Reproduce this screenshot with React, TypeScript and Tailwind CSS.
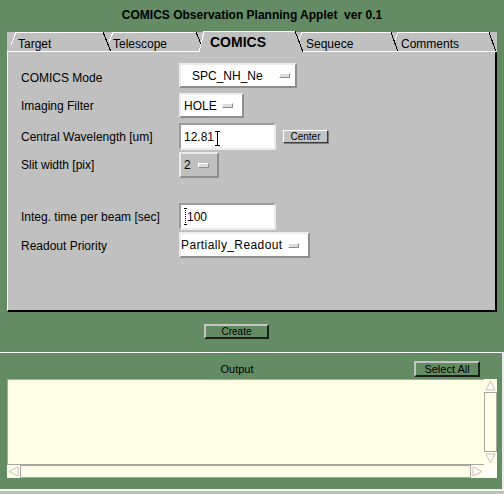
import React from 'react';

const FONT = "font-['Liberation_Sans',Arial,Helvetica,sans-serif]";

// small raised bar shown on the right of an option menu
const Indicator = () => (
  <span className="inline-block shrink-0 w-[11px] h-[5px] bg-[#dcdcdc] border border-t-white border-l-white border-b-[#8c8c8c] border-r-[#8c8c8c]" />
);

const Choice = ({ value, className }: { value: string; className: string }) => (
  <div
    className={`flex items-center h-full border-2 border-t-[#ececec] border-l-[#ececec] border-b-[#8e8e8e] border-r-[#8e8e8e] ${className}`}
  >
    <span>{value}</span>
    <Indicator />
  </div>
);

const inputCls =
  'flex items-center h-full w-[97px] bg-white border-2 border-t-[#9c9c9c] border-l-[#9c9c9c] border-b-[#ececec] border-r-[#ececec] pl-[3px]';

const greenBtn =
  'flex items-center justify-center bg-[#648c64] border-2 border-t-[#c4c4c4] border-l-[#c4c4c4] border-b-[#1c1c1c] border-r-[#1c1c1c]';

const TabOutline = () => (
  <svg className="absolute inset-0" width="490" height="22" viewBox="7 30 490 22" shapeRendering="crispEdges">
    <rect x="7" y="32" width="490" height="20" fill="#c0c0c0" />
    <path d="M16 32.5H103 M113 32.5H196 M302 32.5H391 M398 32.5H489" stroke="#fff" />
    <path d="M16 32L11 45 M113 32L109 42 M302 32L299 40 M398 32L395 40" stroke="#fff" />
    <path d="M103 32L111 52 M196 32L201 44 M391 32L398 52 M489 32L496 52" stroke="#000" />
    {/* selected tab */}
    <polygon points="199,52 204,31 295,31 303,52" fill="#c0c0c0" />
    <path d="M199 52L204 31.5H295" stroke="#fff" fill="none" />
    <path d="M295 31L303 52" stroke="#000" />
    <path d="M7 51.5H199 M303 51.5H497" stroke="#fff" />
  </svg>
);

const Arrow = ({ dir }: { dir: 'up' | 'down' | 'left' | 'right' }) => {
  const pts = {
    up: '6.5,2 11,11 2,11',
    down: '2,2 11,2 6.5,11',
    left: '2,6.5 11,2 11,11',
    right: '2,2 11,6.5 2,11',
  }[dir];
  return (
    <svg width="13" height="13" viewBox="0 0 13 13" className="shrink-0">
      <rect x="0" y="0" width="13" height="13" fill="#fffee8" />
      <polygon points={pts} fill="#fffff6" stroke="#c4c4bc" strokeWidth="1" />
    </svg>
  );
};

const tabs = [
  { label: 'Target', cls: 'w-[106px] pl-[11px] mt-[8px] text-[12px]' },
  { label: 'Telescope', cls: 'w-[97px] mt-[8px] text-[12px]' },
  { label: 'COMICS', cls: 'w-[96px] mt-[5px] text-[14px] font-bold' },
  { label: 'Sequece', cls: 'w-[95px] mt-[8px] text-[12px]' },
  { label: 'Comments', cls: 'w-[96px] mt-[8px] text-[12px]' },
];

export default function App() {
  return (
    <div className={`w-[504px] h-[494px] bg-[#c0c0c0] text-black overflow-hidden ${FONT}`}>
      <div className="bg-[#648c64] h-[352px] flex flex-col">
        {/* title */}
        <div className="h-[30px] pt-[9px] text-center text-[12px] leading-none font-bold whitespace-pre">
          COMICS Observation Planning Applet  ver 0.1
        </div>

        {/* tab strip */}
        <div className="ml-[7px] w-[490px] h-[22px] relative">
          <TabOutline />
          <div className="relative flex h-full">
            {tabs.map((t) => (
              <div key={t.label} className={`leading-none ${t.cls}`}>
                {t.label}
              </div>
            ))}
          </div>
        </div>

        {/* tab body */}
        <div className="ml-[7px] w-[490px] h-[260px] bg-[#c0c0c0] border-l border-l-white border-r-2 border-r-black border-b-2 border-b-black pl-[13px] flex flex-col text-[12px]">
          <div className="mt-[11px] h-[25px] flex items-center">
            <div className="w-[158px] pt-[4px]">COMICS Mode</div>
            <Choice value="SPC_NH_Ne" className="w-[118px] bg-white pl-[11px] gap-[16px]" />
          </div>
          <div className="mt-[5px] h-[25px] flex items-center">
            <div className="w-[158px]">Imaging Filter</div>
            <Choice value="HOLE" className="w-[65px] bg-white pl-[3px] gap-[5px]" />
          </div>
          <div className="mt-[5px] h-[27px] flex items-center">
            <div className="w-[158px]">Central Wavelength [um]</div>
            <div className={inputCls}>
              <span>12.81</span>
              <svg width="6" height="15" viewBox="0 0 6 15" className="ml-[1px] mt-[3px]">
                <path d="M0 0.5H5 M2.5 0.5V14.5 M0 14.5H5" stroke="#000" strokeWidth="1" />
              </svg>
            </div>
            <div className="ml-[7px] w-[45px] h-[13px] flex items-center justify-center text-[10px] leading-none bg-[#c4c4c4] border border-t-white border-l-white border-b-[#3c3c3c] border-r-[#3c3c3c] shadow-[1px_1px_0_#7c7c7c]">
              Center
            </div>
          </div>
          <div className="mt-[2px] h-[26px] flex items-center">
            <div className="w-[158px]">Slit width [pix]</div>
            <Choice value="2" className="w-[40px] bg-[#c0c0c0] pl-[3px] gap-[7px]" />
          </div>
          <div className="mt-[25px] h-[27px] flex items-center">
            <div className="w-[158px]">Integ. time per beam [sec]</div>
            <div className={inputCls}>
              <svg width="3" height="17" viewBox="0 0 3 17">
                <path d="M1.5 0V17" stroke="#000" strokeWidth="1" strokeDasharray="1 1" />
                <path d="M0 0.5H3 M0 16.5H3" stroke="#000" strokeWidth="1" />
              </svg>
              <span>100</span>
            </div>
          </div>
          <div className="mt-[2px] h-[26px] flex items-center">
            <div className="w-[158px] pt-[2px]">Readout Priority</div>
            <Choice value="Partially_Readout" className="w-[131px] bg-white gap-[5px] tracking-[0.4px]" />
          </div>
        </div>

        {/* create */}
        <div className="pl-[204px] pt-[12px]">
          <div className={`${greenBtn} w-[65px] h-[15px] text-[10px] leading-none`}>Create</div>
        </div>
      </div>

      <div className="h-[1px] bg-white" />

      {/* output */}
      <div className="bg-[#ececec] h-[136px]">
        <div className="w-[502px] h-[136px] bg-[#648c64] pt-[8px]">
          <div className="flex items-center h-[16px] text-[11px] leading-none">
            <div className="w-[414px] text-center pl-[60px]">Output</div>
            <div className={`${greenBtn} w-[66px] h-[16px]`}>Select All</div>
          </div>
          <div className="ml-[7px] mt-[2px] w-[490px] h-[99px] grid grid-cols-[477px_13px] grid-rows-[86px_13px]">
            <div className="bg-[#fffee6] border-t border-l border-b border-[#a8a8a0]" />
            <div className="flex flex-col bg-[#fffee8]">
              <Arrow dir="up" />
              <div className="flex-1 border border-[#a8a8a0] bg-[#fffee8]" />
              <Arrow dir="down" />
            </div>
            <div className="flex bg-[#fffee8]">
              <Arrow dir="left" />
              <div className="flex-1 border border-[#a8a8a0] bg-[#fffee8]" />
              <Arrow dir="right" />
            </div>
            <div className="bg-[#fffff6]" />
          </div>
        </div>
      </div>
      <div className="h-[2px] bg-[#f4f4f4]" />
    </div>
  );
}
